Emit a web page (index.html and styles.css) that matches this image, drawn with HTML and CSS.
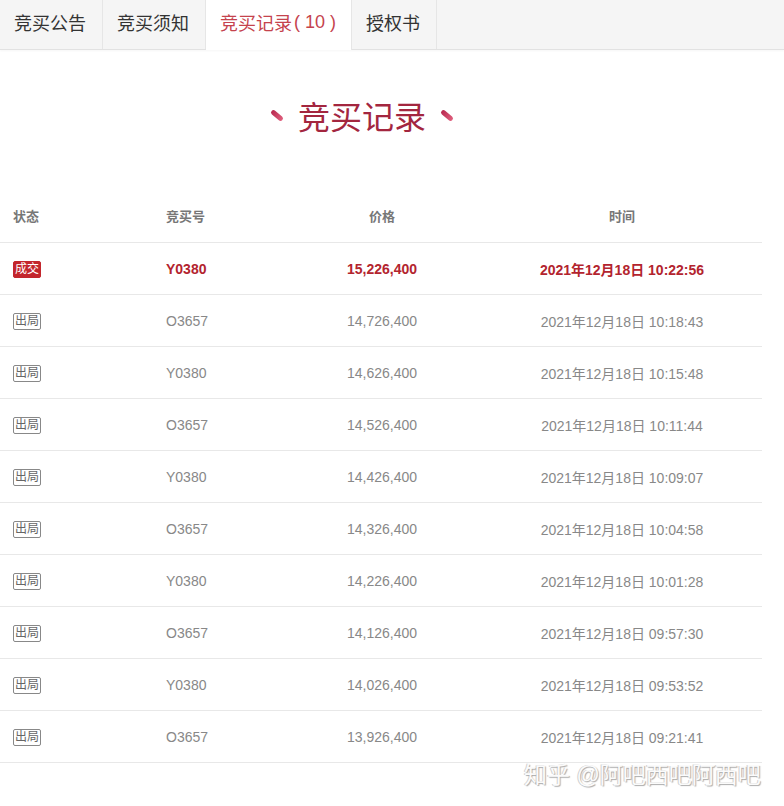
FILE: index.html
```html
<!DOCTYPE html>
<html lang="zh-CN">
<head>
  <meta charset="UTF-8" />
  <meta name="viewport" content="width=device-width, initial-scale=1.0"/>
  <title>竞买记录</title>
  <link rel="stylesheet" href="styles.css">
</head>
<body>
  <nav class="tabs">
    <a class="tab">竞买公告</a>
    <a class="tab">竞买须知</a>
    <a class="tab active">竞买记录<span class="count">( 10 )</span></a>
    <a class="tab">授权书</a>
  </nav>

  <main>
    <h1 class="title"><span class="dot"></span>竞买记录<span class="dot"></span></h1>

    <div class="records">
      <div class="row head">
        <div>状态</div><div>竞买号</div><div class="c">价格</div><div class="c t">时间</div>
      </div>
      <div class="row win">
        <div><span class="badge deal">成交</span></div><div>Y0380</div><div class="c">15,226,400</div><div class="c t">2021年12月18日 10:22:56</div>
      </div>
      <div class="row">
        <div><span class="badge out">出局</span></div><div>O3657</div><div class="c">14,726,400</div><div class="c t">2021年12月18日 10:18:43</div>
      </div>
      <div class="row">
        <div><span class="badge out">出局</span></div><div>Y0380</div><div class="c">14,626,400</div><div class="c t">2021年12月18日 10:15:48</div>
      </div>
      <div class="row">
        <div><span class="badge out">出局</span></div><div>O3657</div><div class="c">14,526,400</div><div class="c t">2021年12月18日 10:11:44</div>
      </div>
      <div class="row">
        <div><span class="badge out">出局</span></div><div>Y0380</div><div class="c">14,426,400</div><div class="c t">2021年12月18日 10:09:07</div>
      </div>
      <div class="row">
        <div><span class="badge out">出局</span></div><div>O3657</div><div class="c">14,326,400</div><div class="c t">2021年12月18日 10:04:58</div>
      </div>
      <div class="row">
        <div><span class="badge out">出局</span></div><div>Y0380</div><div class="c">14,226,400</div><div class="c t">2021年12月18日 10:01:28</div>
      </div>
      <div class="row">
        <div><span class="badge out">出局</span></div><div>O3657</div><div class="c">14,126,400</div><div class="c t">2021年12月18日 09:57:30</div>
      </div>
      <div class="row">
        <div><span class="badge out">出局</span></div><div>Y0380</div><div class="c">14,026,400</div><div class="c t">2021年12月18日 09:53:52</div>
      </div>
      <div class="row">
        <div><span class="badge out">出局</span></div><div>O3657</div><div class="c">13,926,400</div><div class="c t">2021年12月18日 09:21:41</div>
      </div>
    </div>
  </main>

  <div class="watermark">知乎 @阿吧西吧阿西吧</div>
</body>
</html>
```

FILE: styles.css
```css
body, html {
  margin: 0;
  padding: 0;
  font-family: 'Liberation Sans', 'Noto Sans CJK SC', sans-serif;
  background-color: #fff;
  color: #888;
}
.tabs {
  display: flex;
  height: 49px;
  background-color: #f5f5f5;
  border-bottom: 1px solid #e2e2e2;
  box-shadow: 0 1px 2px rgba(0,0,0,0.04);
}
.tab {
  display: flex;
  align-items: center;
  padding: 0 16px 6px 14px;
  font-size: 18px;
  color: #333;
  border-right: 1px solid #e6e6e6;
  text-decoration: none;
}
.tab.active {
  background-color: #fff;
  color: #c5434d;
  height: 50px;
  margin-bottom: -1px;
  box-sizing: border-box;
  padding-right: 15px;
}
.tab .count {
  font-size: 18px;
  margin-left: 2px;
}
main {
  width: 762px;
}
.title {
  display: flex;
  justify-content: center;
  align-items: center;
  margin: 44px 0 0 0;
  padding-right: 38px;
  height: 42px;
  font-size: 32px;
  font-weight: 400;
  color: #a3263f;
}
.dot {
  display: inline-block;
  width: 14px;
  height: 5px;
  border-radius: 3px;
  background: linear-gradient(90deg, #b8284e, #e0607e);
  transform: rotate(40deg);
  margin: 0 14px;
}
.records {
  margin-top: 55px;
}
.row {
  display: grid;
  grid-template-columns: 153px 153px 152px 304px;
  height: 52px;
  align-items: center;
  border-bottom: 1px solid #e8e8e8;
  box-sizing: border-box;
  font-size: 14px;
  color: #888;
}
.row > div {
  padding-left: 13px;
}
.row > div.c {
  padding-left: 0;
  text-align: center;
}
.row > div.t {
  padding-left: 24px;
}
.row.head {
  font-size: 13px;
  font-weight: 700;
  color: #777;
  padding-bottom: 2px;
}
.row.win {
  color: #b3242e;
  font-weight: 700;
}
.badge {
  display: inline-block;
  font-size: 12px;
  line-height: 13px;
  padding: 1px;
  border-radius: 2px;
  font-weight: 400;
}
.badge.deal {
  background-color: #c3262d;
  border: 1px solid #c3262d;
  color: #fff;
}
.badge.out {
  border: 1px solid #888;
  color: #666;
}
.watermark {
  position: absolute;
  left: 524px;
  top: 756px;
  font-size: 23px;
  color: #fbfbfb;
  text-shadow: 1px 1px 1px #aaa, -1px 0 0 #d0d0d0;
}
```
